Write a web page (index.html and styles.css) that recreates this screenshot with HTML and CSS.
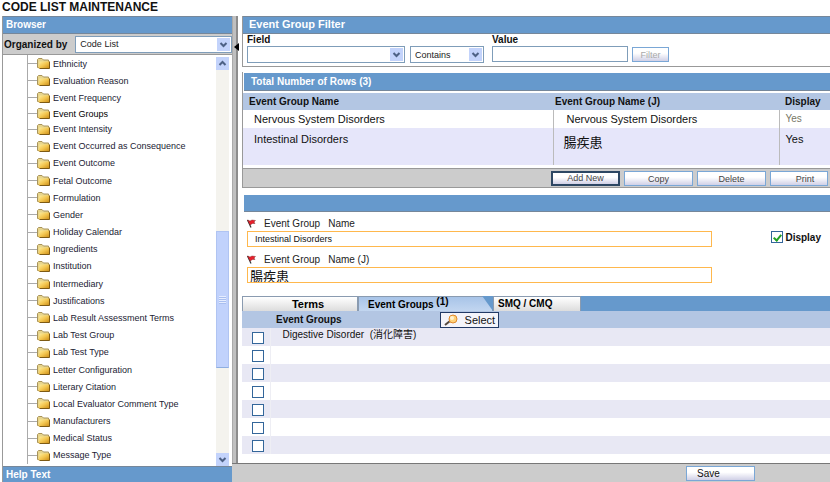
FILE: index.html
```html
<!DOCTYPE html>
<html lang="en">
<head>
    <meta charset="UTF-8">
    <meta name="viewport" content="width=device-width, initial-scale=1.0">
    <title>Code List Maintenance</title>
    <link rel="stylesheet" href="styles.css">
</head>
<body>
    <svg width="0" height="0" class="symbols">
        <defs>
            <linearGradient id="gold" x1="0" y1="0" x2="1" y2="1">
                <stop offset="0" stop-color="#fff0a0"/>
                <stop offset="0.5" stop-color="#f3c650"/>
                <stop offset="1" stop-color="#c98a14"/>
            </linearGradient>
            <symbol id="folder" viewBox="0 0 13 11">
                <path d="M0.5 9.5V1.5L1.5 0.5H5L6.5 2H11.5V9.5Z" fill="#e6d48c" stroke="#a8935a"/>
                <path d="M2.5 3.5H12.5V10.5H1.5Z" fill="url(#gold)"/>
                <path d="M2.5 10.5H12.5V3.5" fill="none" stroke="#7d5a14"/>
            </symbol>
            <symbol id="chevron" viewBox="0 0 13 13">
                <path d="M3.5 5L6.5 8L9.5 5" fill="none" stroke="#4d6185" stroke-width="2"/>
            </symbol>
            <symbol id="flag" viewBox="0 0 9 9">
                <path d="M0.5 1L4 8.5" stroke="#333" stroke-width="1.2"/>
                <path d="M0.5 1L3 2L5 1L8.5 1.5L7 3L8 4.5L5.5 4.5L3 6Z" fill="#e8202c" stroke="#6a1a1a" stroke-width="0.4"/>
            </symbol>
        </defs>
    </svg>

    <h1 class="page-title">CODE LIST MAINTENANCE</h1>
    <div class="layout">
        <aside class="sidebar">
            <h2 class="bar">Browser</h2>
            <div class="organize">
                <label for="organized">Organized by</label>
                <span class="select">
                    <select id="organized"><option>Code List</option></select>
                    <svg><use href="#chevron"/></svg>
                </span>
            </div>
            <div class="browser">
                <ul class="tree">
                    <li><svg><use href="#folder"/></svg><a href="#">Ethnicity</a></li>
                    <li><svg><use href="#folder"/></svg><a href="#">Evaluation Reason</a></li>
                    <li><svg><use href="#folder"/></svg><a href="#">Event Frequency</a></li>
                    <li class="active"><svg><use href="#folder"/></svg><a href="#">Event Groups</a></li>
                    <li><svg><use href="#folder"/></svg><a href="#">Event Intensity</a></li>
                    <li><svg><use href="#folder"/></svg><a href="#">Event Occurred as Consequence</a></li>
                    <li><svg><use href="#folder"/></svg><a href="#">Event Outcome</a></li>
                    <li><svg><use href="#folder"/></svg><a href="#">Fetal Outcome</a></li>
                    <li><svg><use href="#folder"/></svg><a href="#">Formulation</a></li>
                    <li><svg><use href="#folder"/></svg><a href="#">Gender</a></li>
                    <li><svg><use href="#folder"/></svg><a href="#">Holiday Calendar</a></li>
                    <li><svg><use href="#folder"/></svg><a href="#">Ingredients</a></li>
                    <li><svg><use href="#folder"/></svg><a href="#">Institution</a></li>
                    <li><svg><use href="#folder"/></svg><a href="#">Intermediary</a></li>
                    <li><svg><use href="#folder"/></svg><a href="#">Justifications</a></li>
                    <li><svg><use href="#folder"/></svg><a href="#">Lab Result Assessment Terms</a></li>
                    <li><svg><use href="#folder"/></svg><a href="#">Lab Test Group</a></li>
                    <li><svg><use href="#folder"/></svg><a href="#">Lab Test Type</a></li>
                    <li><svg><use href="#folder"/></svg><a href="#">Letter Configuration</a></li>
                    <li><svg><use href="#folder"/></svg><a href="#">Literary Citation</a></li>
                    <li><svg><use href="#folder"/></svg><a href="#">Local Evaluator Comment Type</a></li>
                    <li><svg><use href="#folder"/></svg><a href="#">Manufacturers</a></li>
                    <li><svg><use href="#folder"/></svg><a href="#">Medical Status</a></li>
                    <li><svg><use href="#folder"/></svg><a href="#">Message Type</a></li>
                </ul>
                <div class="scrollbar">
                    <button class="scroll-up" aria-label="Scroll up"><svg><use href="#chevron"/></svg></button>
                    <div class="track-top"></div>
                    <div class="thumb"><i></i></div>
                    <div class="track-bottom"></div>
                    <button aria-label="Scroll down"><svg><use href="#chevron"/></svg></button>
                </div>
            </div>
            <h2 class="bar help">Help Text</h2>
        </aside>

        <div class="right">
            <div class="workspace">
                <div class="splitter">
                    <svg viewBox="0 0 5 8"><path d="M5 0V8L0 4Z"/></svg>
                </div>
                <main class="content">
                    <section class="panel">
                        <h2 class="bar filter-title">Event Group Filter</h2>
                        <div class="filter">
                            <div class="field">
                                <label for="field">Field</label>
                                <span class="select">
                                    <select id="field"><option></option></select>
                                    <svg><use href="#chevron"/></svg>
                                </span>
                            </div>
                            <span class="select contains">
                                <select aria-label="Condition"><option>Contains</option></select>
                                <svg><use href="#chevron"/></svg>
                            </span>
                            <div class="value">
                                <label for="value">Value</label>
                                <input type="text" id="value">
                            </div>
                            <button class="btn filter-btn" disabled>Filter</button>
                        </div>
                    </section>

                    <section class="panel results">
                        <h2 class="bar total">Total Number of Rows (3)</h2>
                        <table class="groups">
                            <thead>
                                <tr><th>Event Group Name</th><th class="name-j">Event Group Name (J)</th><th class="shown">Display</th></tr>
                            </thead>
                            <tbody>
                                <tr><td>Nervous System Disorders</td><td>Nervous System Disorders</td><td class="faded">Yes</td></tr>
                                <tr class="selected"><td>Intestinal Disorders</td><td class="cjk">腸疾患</td><td>Yes</td></tr>
                            </tbody>
                        </table>
                        <div class="actions">
                            <button class="btn default">Add New</button>
                            <button class="btn">Copy</button>
                            <button class="btn">Delete</button>
                            <button class="btn print">Print</button>
                        </div>
                    </section>

                    <section class="details">
                        <div class="bar blank"></div>
                        <div class="form">
                            <div class="inputs">
                                <label for="name"><svg><use href="#flag"/></svg><span>Event Group</span><span>Name</span></label>
                                <input type="text" id="name" value="Intestinal Disorders">
                                <label for="name-j"><svg><use href="#flag"/></svg><span>Event Group</span><span>Name (J)</span></label>
                                <input type="text" id="name-j" class="cjk" value="腸疾患">
                            </div>
                            <label class="display"><input type="checkbox" class="check" checked>Display</label>
                        </div>
                    </section>

                    <section class="terms">
                        <div class="tabs">
                            <button class="tab">Terms</button>
                            <button class="tab current">Event Groups <span>(1)</span></button>
                            <button class="tab smq">SMQ / CMQ</button>
                        </div>
                        <div class="terms-head">
                            <h3>Event Groups</h3>
                            <button class="select-btn">
                                <svg viewBox="0 0 15 12">
                                    <path d="M1 11L6 7" stroke="#54483f" stroke-width="2"/>
                                    <circle cx="9" cy="5" r="4" fill="#ffd27a" stroke="#e08a2c"/>
                                    <circle cx="8" cy="4" r="2" fill="#fff3d0"/>
                                </svg>
                                Select
                            </button>
                        </div>
                        <table class="rows">
                            <tr><td><input type="checkbox" class="check" aria-label="Row 1"></td><td>Digestive Disorder &nbsp;(消化障害)</td></tr>
                            <tr><td><input type="checkbox" class="check" aria-label="Row 2"></td><td></td></tr>
                            <tr><td><input type="checkbox" class="check" aria-label="Row 3"></td><td></td></tr>
                            <tr><td><input type="checkbox" class="check" aria-label="Row 4"></td><td></td></tr>
                            <tr><td><input type="checkbox" class="check" aria-label="Row 5"></td><td></td></tr>
                            <tr><td><input type="checkbox" class="check" aria-label="Row 6"></td><td></td></tr>
                            <tr><td><input type="checkbox" class="check" aria-label="Row 7"></td><td></td></tr>
                        </table>
                    </section>
                </main>
            </div>
            <footer class="footer">
                <button class="btn save">Save</button>
            </footer>
        </div>
    </div>
</body>
</html>
```
FILE: styles.css
```css
* {
    box-sizing: border-box;
}

body {
    margin: 0;
    min-height: 100vh;
    display: flex;
    flex-direction: column;
    background-color: #ffffff;
    color: #111111;
    font-family: "Liberation Sans", "Noto Sans CJK JP", Arial, sans-serif;
    font-size: 10px;
    overflow-x: hidden;
}

h1, h2, h3, ul {
    margin: 0;
    padding: 0;
}

button, input, select {
    font: inherit;
    color: inherit;
    margin: 0;
    padding: 0;
    border-radius: 0;
}

svg {
    display: block;
    flex: none;
}

.symbols {
    position: absolute;
}

.page-title {
    height: 16px;
    padding-left: 2px;
    font-size: 12px;
    line-height: 15px;
}

.layout {
    flex: 1;
    display: flex;
}

.bar {
    height: 18px;
    padding-left: 3px;
    background-color: #6699cc;
    border-top: 1px solid #76879a;
    border-bottom: 1px solid #76879a;
    color: #ffffff;
    font-size: 10px;
    line-height: 16px;
}

/* browser */
.sidebar {
    width: 230px;
    flex: none;
    margin-left: 2px;
    display: flex;
    flex-direction: column;
    border-left: 1px solid #999999;
}

.organize {
    height: 21px;
    display: flex;
    align-items: center;
    gap: 8px;
    padding-left: 1px;
    background-color: #cccccc;
    border-bottom: 1px solid #999999;
    font-weight: bold;
}

.select {
    position: relative;
    display: block;
    flex: 1;
}

.select select {
    display: block;
    width: 100%;
    height: 17px;
    padding-left: 4px;
    appearance: none;
    background-color: #ffffff;
    border: 1px solid #7f9db9;
    font-size: 9px;
    font-weight: normal;
    color: #222222;
}

.select svg {
    position: absolute;
    right: 2px;
    top: 2px;
    width: 13px;
    height: 13px;
    background-color: #c3d3fb;
    pointer-events: none;
}

.browser {
    flex: 1;
    display: flex;
}

.tree {
    flex: 1;
    display: flex;
    flex-direction: column;
    margin: 0 0 2px 24px;
    border-left: 1px solid #aaaaaa;
    list-style: none;
    font-size: 9px;
}

.tree li {
    flex: 1;
    display: flex;
    align-items: center;
    min-height: 14px;
}

.tree li::before {
    content: "";
    width: 9px;
    border-top: 1px solid #aaaaaa;
}

.tree li.active {
    flex: 0 0 14px;
}

.tree svg {
    width: 13px;
    height: 11px;
}

.tree a {
    margin-left: 3px;
    color: #222233;
    line-height: 14px;
    text-decoration: none;
}

.tree .active a {
    color: #000000;
}

.scrollbar {
    width: 13px;
    margin: 2px 3px 0 0;
    display: flex;
    flex-direction: column;
    background-color: #f4f3ee;
}

.scrollbar button {
    height: 13px;
    border: 0;
    background-color: #c3d3fb;
}

.scrollbar svg {
    width: 13px;
    height: 13px;
}

.scroll-up svg {
    transform: rotate(180deg);
}

.track-top {
    flex: 163;
}

.thumb {
    flex: 136;
    display: flex;
    align-items: center;
    justify-content: center;
    background-color: #c1d2fc;
    border: 1px solid #b0c4f2;
    border-bottom-color: #8eaee0;
}

.thumb i {
    width: 7px;
    height: 8px;
    background: repeating-linear-gradient(#e6edff 0 1px, #a9bff0 1px 2px);
}

.track-bottom {
    flex: 86;
}

.help {
    height: 16px;
    border-bottom: 0;
}

/* right side */
.right {
    flex: 1;
    min-width: 0;
    display: flex;
    flex-direction: column;
}

.workspace {
    flex: 1;
    display: flex;
}

.splitter {
    width: 6px;
    flex: none;
    padding: 27px 0 0 1px;
    background-color: #c0c0c0;
    border-left: 1px solid #aaaaaa;
    border-right: 2px solid #8c8c8c;
}

.splitter svg {
    width: 5px;
    height: 8px;
}

.content {
    flex: 1;
    min-width: 0;
    padding-left: 4px;
}

.panel {
    border-left: 1px solid #999999;
    border-bottom: 1px solid #999999;
}

.filter-title {
    padding-left: 6px;
    font-size: 11px;
    line-height: 14px;
}

.filter {
    display: flex;
    align-items: flex-end;
    padding: 0 4px 3px;
}

.filter label {
    display: block;
    height: 12px;
    line-height: 12px;
    font-weight: bold;
}

.field {
    width: 158px;
    margin-right: 5px;
}

.contains {
    flex: none;
    width: 74px;
    margin-right: 8px;
}

.value {
    width: 136px;
    margin-right: 4px;
}

.value input {
    display: block;
    width: 100%;
    height: 16px;
    margin-bottom: 1px;
    border: 1px solid #7f9db9;
}

.btn {
    width: 69px;
    height: 15px;
    border: 1px solid #7aa7d6;
    background: linear-gradient(#ffffff 40%, #d0d0e6);
    color: #444444;
    font-size: 9px;
    line-height: 12px;
}

.filter-btn {
    width: 37px;
    margin-bottom: 1px;
    color: #aaaaaa;
}

.results {
    margin-top: 5px;
    padding-top: 1px;
}

.total {
    height: 18px;
    margin: 0 0 2px 1px;
    padding-left: 7px;
    border-top: 0;
    line-height: 18px;
}

.groups {
    width: 100%;
    border-collapse: collapse;
    table-layout: fixed;
    margin-bottom: 3px;
    font-size: 11px;
}

.groups th {
    height: 17px;
    padding: 0 6px;
    background-color: #b3c6e3;
    font-size: 10px;
    text-align: left;
}

.name-j {
    width: 226px;
}

.groups .name-j {
    padding-left: 2px;
}

.shown {
    width: 51px;
}

.groups td {
    height: 18px;
    padding: 0 0 0 11px;
    line-height: 16px;
}

.groups td + td {
    padding-left: 13px;
    border-left: 1px solid #bbbbbb;
}

.groups td:last-child {
    padding-left: 6px;
}

.groups .faded {
    color: #777766;
    font-size: 10px;
}

.selected td {
    height: 37px;
    padding-top: 3px;
    background-color: #e6e6fa;
    vertical-align: top;
}

.groups .selected .cjk {
    padding-top: 7px;
    padding-left: 10px;
    font-size: 13px;
}

.actions {
    display: flex;
    justify-content: flex-end;
    gap: 4px;
    padding: 2px 2px 1px 0;
    background-color: #cccccc;
    border-top: 1px solid #999999;
}

.btn.default {
    border: 2px solid #2d4763;
    line-height: 11px;
}

.print {
    width: 58px;
    padding-left: 12px;
}

/* details form */
.blank {
    height: 17px;
    margin: 7px 0 0 2px;
    border-top: 0;
}

.form {
    display: flex;
    justify-content: space-between;
    padding: 4px 9px 13px 5px;
}

.inputs {
    width: 81%;
}

.inputs label {
    display: flex;
    align-items: center;
    gap: 8px;
    height: 15px;
    color: #222222;
}

.inputs svg {
    width: 9px;
    height: 9px;
}

.inputs input {
    display: block;
    width: 100%;
    height: 16px;
    margin-bottom: 5px;
    padding-left: 7px;
    border: 1px solid #ffb84d;
    outline: 0;
    font-size: 9px;
}

.inputs .cjk {
    margin-bottom: 0;
    padding-left: 2px;
    font-size: 13px;
    line-height: 14px;
}

.check {
    width: 12px;
    height: 12px;
    flex: none;
    display: block;
    appearance: none;
    background-color: #ffffff;
    border: 1px solid #33669a;
}

.check:checked::before {
    content: "";
    display: block;
    width: 3px;
    height: 6px;
    margin: 1px 0 0 3px;
    border: solid #21a121;
    border-width: 0 2px 2px 0;
    transform: rotate(40deg);
}

.display {
    display: flex;
    align-items: center;
    align-self: flex-start;
    gap: 2px;
    margin-top: 15px;
    font-weight: bold;
}

/* tabs */
.tabs {
    display: flex;
    height: 15px;
    background-color: #6699cc;
}

.tab {
    width: 116px;
    border: 1px solid #8a9bb0;
    border-bottom: 0;
    background: linear-gradient(#ffffff, #dcdcdc);
    color: #000000;
    font-size: 11px;
    font-weight: bold;
    line-height: 12px;
    padding-left: 16px;
}

.current {
    width: 135px;
    padding: 0 0 0 9px;
    background: linear-gradient(#a8c4e8, #c2d6f0);
    clip-path: polygon(0 0, 92% 0, 100% 100%, 0 100%);
    font-size: 10px;
    line-height: 16px;
    text-align: left;
}

.current span {
    vertical-align: 3px;
    line-height: 8px;
}

.smq {
    width: 88px;
    padding: 0 0 0 4px;
    font-size: 10px;
    text-align: left;
}

.terms-head {
    display: flex;
    align-items: center;
    gap: 98px;
    height: 17px;
    padding-left: 34px;
    background-color: #b3c6e3;
}

.terms-head h3 {
    font-size: 10px;
    line-height: 14px;
}

.select-btn {
    display: flex;
    align-items: center;
    gap: 6px;
    width: 59px;
    height: 16px;
    padding-left: 3px;
    background-color: #f4f4fa;
    border: 1px solid #223a66;
    font-size: 11px;
    white-space: nowrap;
}

.select-btn svg {
    width: 15px;
    height: 12px;
}

.rows {
    width: 100%;
    border-collapse: collapse;
    margin-bottom: 8px;
}

.rows td {
    height: 18px;
    padding: 0 0 0 12px;
    line-height: 13px;
    vertical-align: top;
}

.rows td:first-child {
    width: 28px;
    padding: 2px 0 0 10px;
    vertical-align: middle;
    border-right: 1px solid #eeeef4;
}

.rows tr:nth-child(odd) {
    background-color: #e8e8f4;
}

.footer {
    display: flex;
    justify-content: flex-end;
    height: 19px;
    padding: 2px 75px 0 0;
    background-color: #cccccc;
    border-top: 1px solid #777777;
}

.save {
    padding-right: 24px;
    color: #111111;
    font-size: 10px;
}
```
